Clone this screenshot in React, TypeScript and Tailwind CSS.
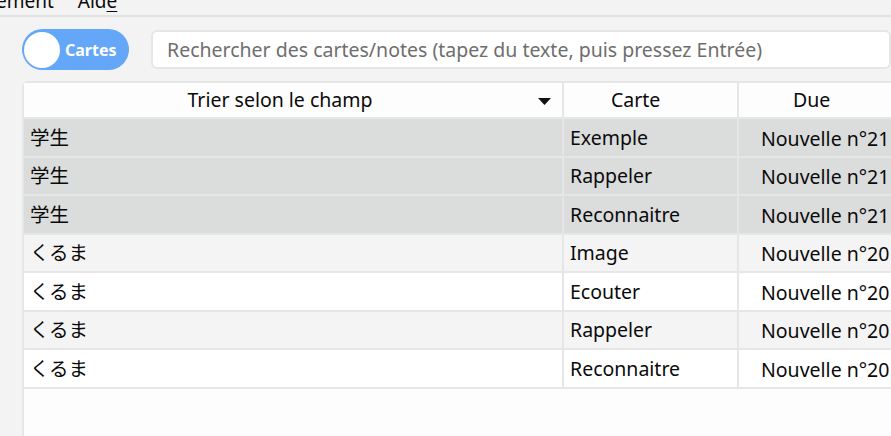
import React from "react";

const rows = [
  { f: "学生", c: "Exemple", d: "Nouvelle n°21", sel: true },
  { f: "学生", c: "Rappeler", d: "Nouvelle n°21", sel: true },
  { f: "学生", c: "Reconnaitre", d: "Nouvelle n°21", sel: true },
  { f: "くるま", c: "Image", d: "Nouvelle n°20", sel: false, alt: true },
  { f: "くるま", c: "Ecouter", d: "Nouvelle n°20", sel: false, alt: false },
  { f: "くるま", c: "Rappeler", d: "Nouvelle n°20", sel: false, alt: true },
  { f: "くるま", c: "Reconnaitre", d: "Nouvelle n°20", sel: false, alt: false },
];

export default function App() {
  const font = { fontFamily: '"Noto Sans", "Noto Sans CJK JP", sans-serif' };
  return (
    <div className="w-[891px] h-[436px] overflow-hidden bg-[#f3f3f3] text-[#0a0a0a]" style={font}>
      {/* menu bar */}
      <div className="h-[17px] border-b-2 border-[#e2e2e2] overflow-hidden flex text-[19px] leading-none">
        <span className="ml-[-4px] mt-[-8px]">ement</span>
        <span className="ml-[24px] mt-[-8px]">
          Aid<span className="underline underline-offset-[3px]">e</span>
        </span>
      </div>
      {/* toolbar */}
      <div className="flex items-center pl-[22px] pt-[12px] gap-[22px]">
        <div className="w-[107px] h-[41px] rounded-full bg-[#64a6f8] flex items-center pl-[2px] shrink-0">
          <div className="w-[36px] h-[36px] rounded-full bg-white" />
          <span className="ml-[5px] text-white font-bold text-[16px]">Cartes</span>
        </div>
        <div className="flex-1 h-[39px] bg-white border-2 border-[#e6e6e6] rounded-[6px] flex items-center pl-[14px] text-[19.5px] text-[#6e6e6e] whitespace-nowrap overflow-hidden">
          Rechercher des cartes/notes (tapez du texte, puis pressez Entrée)
        </div>
      </div>
      {/* table */}
      <div className="ml-[22px] mt-[11px] h-[400px] bg-[#fdfdfd] border-l-2 border-t-2 border-[#e6e6e6] rounded-tl-[6px] text-[19.5px]">
        <div className="flex h-[36px] border-b-2 border-[#e6e6e6] bg-[#fdfdfd]">
          <div className="w-[540px] shrink-0 relative flex items-center justify-center pr-[26px] border-r-2 border-[#e6e6e6]">
            Trier selon le champ
            <svg className="absolute right-[11px] top-[15px]" width="13" height="7" viewBox="0 0 13 7">
              <path d="M0 0 H13 L6.5 7 Z" fill="#111" />
            </svg>
          </div>
          <div className="w-[175px] shrink-0 flex items-center pl-[47px] border-r-2 border-[#e6e6e6]">Carte</div>
          <div className="flex-1 flex items-center pl-[54px] whitespace-nowrap">Due</div>
        </div>
        {rows.map((r, i) => (
          <div
            key={i}
            className={`flex h-[38.5px] border-b-2 border-[#e6e6e6] ${
              r.sel ? "bg-[#dbdcdc]" : r.alt ? "bg-[#f4f4f4]" : "bg-white"
            }`}
          >
            <div className="w-[540px] shrink-0 flex items-center pl-[6px] border-r-2 border-[#e6e6e6]">{r.f}</div>
            <div className="w-[175px] shrink-0 flex items-center pl-[6px] border-r-2 border-[#e6e6e6]">{r.c}</div>
            <div className="flex-1 flex items-center pl-[22px] pt-[2px] whitespace-nowrap">{r.d}</div>
          </div>
        ))}
      </div>
    </div>
  );
}
